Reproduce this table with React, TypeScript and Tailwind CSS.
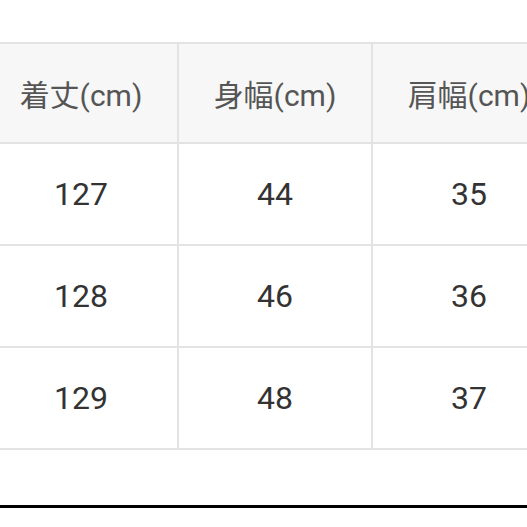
import React from 'react';

// サイズ表
const headers = ['着丈(cm)', '身幅(cm)', '肩幅(cm)'];
const rows = [
    ['127', '44', '35'],
    ['128', '46', '36'],
    ['129', '48', '37'],
];

const App: React.FC = () => {
    return (
        <div
            className="w-[527px] h-[527px] overflow-hidden bg-white pt-[42px]"
            style={{ fontFamily: 'Roboto, "Noto Sans CJK JP", sans-serif' }}
        >
            <div className="ml-[-17px] w-[584px] grid grid-cols-[192px_192px_192px] gap-[2px] p-[2px] bg-[#e3e3e3]">
                {headers.map((h) => (
                    <div key={h} className="h-[98px] pt-[4px] bg-[#f7f7f7] flex items-center justify-center text-[30px] text-[#555]">
                        {h}
                    </div>
                ))}
                {rows.map((row, i) =>
                    row.map((v, j) => (
                        <div key={`${i}-${j}`} className="h-[100px] bg-white flex items-center justify-center text-[32px] text-[#333]">
                            {v}
                        </div>
                    ))
                )}
            </div>
            <div className="mt-[55px] h-[3px] bg-black" />
        </div>
    );
};

export default App;
